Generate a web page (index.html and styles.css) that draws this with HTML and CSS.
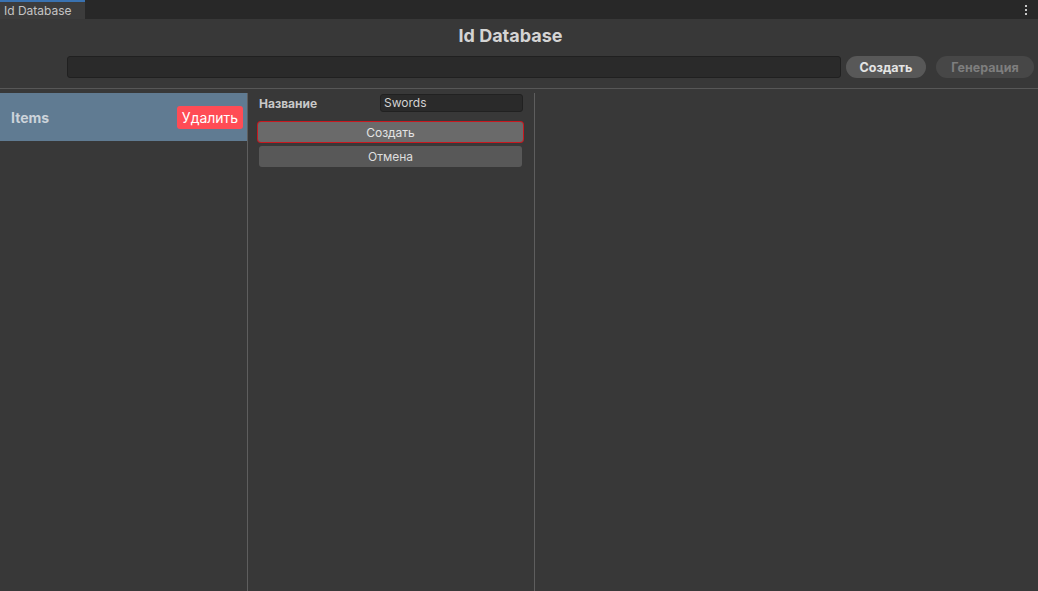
FILE: index.html
```html
<!DOCTYPE html>
<html>
<head>
<meta charset="utf-8">
<link rel="stylesheet" href="styles.css">
</head>
<body>
<div class="tabbar">
  <div class="tab">Id Database</div>
  <div class="menu-dots"><span></span><span></span><span></span></div>
</div>
<div class="window">
  <div class="title">Id Database</div>
  <div class="toolbar">
    <div class="search"></div>
    <button class="pill primary">Создать</button>
    <button class="pill disabled">Генерация</button>
  </div>
  <div class="columns">
    <div class="col-left">
      <div class="item-row">
        <span class="item-name">Items</span>
        <button class="delete">Удалить</button>
      </div>
    </div>
    <div class="col-mid">
      <div class="field-row">
        <span class="label">Название</span>
        <div class="text-input">Swords</div>
      </div>
      <button class="btn focused">Создать</button>
      <button class="btn">Отмена</button>
    </div>
    <div class="col-right"></div>
  </div>
</div>
</body>
</html>
```

FILE: styles.css
```css
* { box-sizing: border-box; }
html, body {
  margin: 0;
  padding: 0;
  width: 1038px;
  height: 591px;
  overflow: hidden;
  background: #383838;
  font-family: Inter, "Noto Sans", sans-serif;
}
.tabbar {
  height: 19px;
  background: #282828;
  display: flex;
  justify-content: space-between;
  align-items: stretch;
}
.tab {
  width: 85px;
  background: #3c3c3c;
  border-top: 2px solid #3a72b0;
  color: #c4c4c4;
  font-size: 12px;
  line-height: 17px;
  padding-left: 4px;
}
.menu-dots {
  width: 24px;
  display: flex;
  flex-direction: column;
  align-items: center;
  justify-content: center;
  gap: 2px;
  padding-top: 1px;
}
.menu-dots span {
  width: 2px;
  height: 2px;
  background: #c8c8c8;
}
.window {
  display: flex;
  flex-direction: column;
  height: 572px;
}
.title {
  text-align: center;
  color: #d4d4d4;
  font-weight: 700;
  font-size: 18px;
  line-height: 22px;
  padding-top: 6px;
  padding-right: 17px;
  height: 37px;
}
.toolbar {
  display: flex;
  align-items: center;
  padding-left: 67px;
  padding-right: 4px;
  height: 22px;
  gap: 0;
}
.search {
  width: 774px;
  height: 22px;
  background: #2a2a2a;
  border: 1px solid #202020;
  border-radius: 3px;
}
.pill {
  height: 22px;
  border: none;
  border-radius: 11px;
  font-family: inherit;
  font-weight: 700;
  font-size: 12.5px;
  padding: 0;
}
.pill.primary {
  margin-left: 5px;
  width: 80px;
  background: #585858;
  color: #e4e4e4;
}
.pill.disabled {
  margin-left: 10px;
  width: 98px;
  background: #474747;
  color: #7e7e7e;
}
.columns {
  margin-top: 10px;
  border-top: 1px solid #575757;
  padding-top: 4px;
  display: flex;
  flex: 1;
}
.col-left {
  width: 248px;
  border-right: 1px solid #5e5e5e;
}
.item-row {
  height: 48px;
  background: #607b92;
  display: flex;
  align-items: center;
  justify-content: space-between;
  padding-left: 11px;
  padding-right: 4px;
}
.item-name {
  color: #ccd3da;
  font-weight: 700;
  font-size: 14px;
}
.delete {
  height: 23px;
  width: 66px;
  border: none;
  border-radius: 3px;
  background: #ff4c55;
  color: #ffffff;
  font-family: inherit;
  font-size: 14px;
  padding: 0;
}
.col-mid {
  width: 287px;
  border-right: 1px solid #5e5e5e;
  padding: 1px 11px 0 10px;
  display: flex;
  flex-direction: column;
}
.field-row {
  display: flex;
  align-items: center;
  justify-content: space-between;
  height: 18px;
  padding-left: 1px;
}
.label {
  color: #c8c8c8;
  font-weight: 700;
  font-size: 12px;
}
.text-input {
  width: 143px;
  height: 18px;
  background: #2a2a2a;
  border: 1px solid #212121;
  border-radius: 3px;
  color: #d2d2d2;
  font-size: 12px;
  line-height: 16px;
  padding-left: 3px;
}
.btn {
  height: 21px;
  border: none;
  border-radius: 3px;
  background: #585858;
  color: #dedede;
  font-family: inherit;
  font-size: 12px;
  padding: 0;
  margin: 4px 1px 0 1px;
}
.btn.focused {
  margin: 10px 0 0 0;
  height: 20px;
  background: #6a6a6a;
  box-shadow: 0 0 0 1px #c8181f;
  color: #e4e4e4;
}
.col-right {
  flex: 1;
}
```
